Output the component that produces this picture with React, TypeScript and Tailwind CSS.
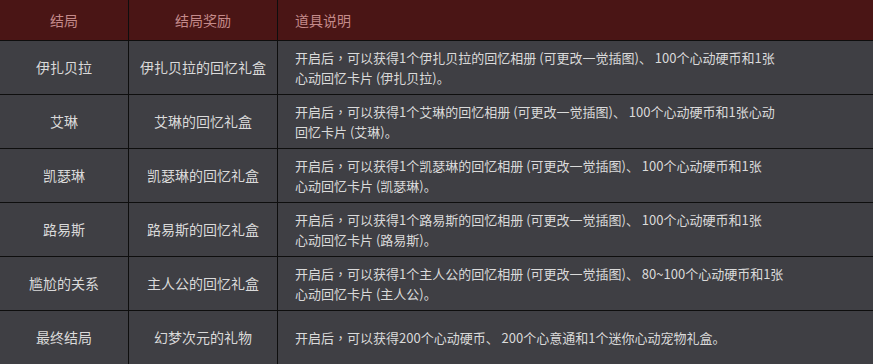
import React from "react";

const rows: { a: string; b: string; lines: string[] }[] = [
  {
    a: "伊扎贝拉",
    b: "伊扎贝拉的回忆礼盒",
    lines: [
      "可以获得1个伊扎贝拉的回忆相册 (可更改一觉插图)、 100个心动硬币和1张",
      "心动回忆卡片 (伊扎贝拉)。",
    ],
  },
  {
    a: "艾琳",
    b: "艾琳的回忆礼盒",
    lines: [
      "可以获得1个艾琳的回忆相册 (可更改一觉插图)、 100个心动硬币和1张心动",
      "回忆卡片 (艾琳)。",
    ],
  },
  {
    a: "凯瑟琳",
    b: "凯瑟琳的回忆礼盒",
    lines: [
      "可以获得1个凯瑟琳的回忆相册 (可更改一觉插图)、 100个心动硬币和1张",
      "心动回忆卡片 (凯瑟琳)。",
    ],
  },
  {
    a: "路易斯",
    b: "路易斯的回忆礼盒",
    lines: [
      "可以获得1个路易斯的回忆相册 (可更改一觉插图)、 100个心动硬币和1张",
      "心动回忆卡片 (路易斯)。",
    ],
  },
  {
    a: "尴尬的关系",
    b: "主人公的回忆礼盒",
    lines: [
      "可以获得1个主人公的回忆相册 (可更改一觉插图)、 80~100个心动硬币和1张",
      "心动回忆卡片 (主人公)。",
    ],
  },
  {
    a: "最终结局",
    b: "幻梦次元的礼物",
    lines: ["可以获得200个心动硬币、 200个心意通和1个迷你心动宠物礼盒。"],
  },
];

export default function App() {
  return (
    <div
      className="w-[873px] h-[364px] overflow-hidden bg-[#3f3f44]"
      style={{ fontFamily: '"Noto Sans CJK SC", "Noto Sans", sans-serif' }}
    >
      <div className="grid grid-cols-[129px_149px_1fr] h-[41px] bg-[#4a1515] border-b border-[#0e0e0e] text-[14px] text-[#c48a8a]">
        <div className="flex items-center justify-center border-r border-[#0e0e0e]">结局</div>
        <div className="flex items-center justify-center border-r border-[#0e0e0e]">结局奖励</div>
        <div className="flex items-center pl-[17px]">道具说明</div>
      </div>
      {rows.map((r, i) => (
        <div
          key={i}
          className="grid grid-cols-[129px_149px_1fr] h-[54px] border-b border-[#0e0e0e] text-[#dadada]"
        >
          <div className="flex items-center justify-center border-r border-[#0e0e0e] text-[14px]">{r.a}</div>
          <div className="flex items-center justify-center border-r border-[#0e0e0e] text-[14px]">{r.b}</div>
          <div className="flex flex-col justify-center pl-[17px] text-[13px] leading-[20px] whitespace-nowrap">
            {r.lines.map((l, j) => (
              <div key={j}>
                {j === 0 ? (
                  <>
                    开启后
                    <span style={{ fontFamily: '"Noto Sans CJK TC", sans-serif' }}>，</span>
                  </>
                ) : null}
                {l}
              </div>
            ))}
          </div>
        </div>
      ))}
    </div>
  );
}
